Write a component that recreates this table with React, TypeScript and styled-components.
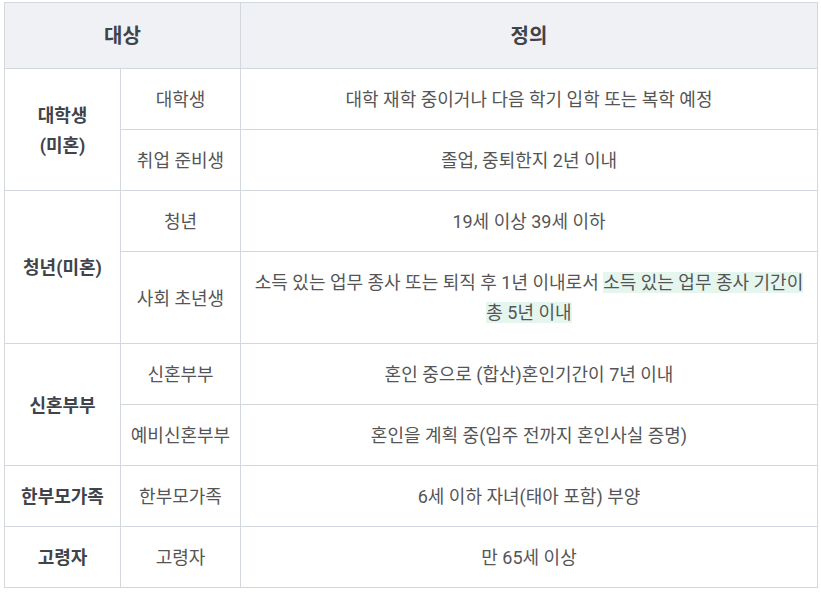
import styled, { createGlobalStyle } from "styled-components";

const GlobalStyle = createGlobalStyle`
  html, body {
    margin: 0;
    padding: 0;
    background: #ffffff;
  }
  body {
    font-family: Roboto, "Noto Sans CJK KR", sans-serif;
    color: #4a4a4a;
  }
`;

const Wrap = styled.div`
  padding: 2px 4px 0 4px;
`;

const Table = styled.table`
  width: 814px;
  border-collapse: collapse;
  table-layout: fixed;
  font-size: 18px;
  line-height: 30px;
`;

const Th = styled.th`
  background-color: #eff1f5;
  border: 1px solid #d3d8df;
  padding: 18px 10px 17px;
  font-size: 20px;
  font-weight: 700;
  color: #40434a;
  text-align: center;
`;

const Td = styled.td<{ $tall?: boolean }>`
  border: 1px solid #d3d8df;
  padding: 16px 5px ${({ $tall }) => ($tall ? "15px" : "14px")};
  text-align: center;
  vertical-align: middle;
  color: #555555;
`;

const GroupCell = styled(Td)`
  font-weight: 700;
  color: #40434a;
  padding-left: 2px;
  padding-right: 2px;
`;

const Mark = styled.span`
  background-color: #e5f6ef;
`;

type SubRow = { name: string; desc: React.ReactNode; tall?: boolean };
type Group = { title: React.ReactNode; rows: SubRow[] };

const groups: Group[] = [
  {
    title: (
      <>
        대학생
        <br />
        (미혼)
      </>
    ),
    rows: [
      { name: "대학생", desc: "대학 재학 중이거나 다음 학기 입학 또는 복학 예정" },
      { name: "취업 준비생", desc: "졸업, 중퇴한지 2년 이내" },
    ],
  },
  {
    title: "청년(미혼)",
    rows: [
      { name: "청년", desc: "19세 이상 39세 이하" },
      {
        name: "사회 초년생",
        tall: true,
        desc: (
          <>
            소득 있는 업무 종사 또는 퇴직 후 1년 이내로서{" "}
            <Mark>소득 있는 업무 종사 기간이 총 5년 이내</Mark>
          </>
        ),
      },
    ],
  },
  {
    title: "신혼부부",
    rows: [
      { name: "신혼부부", desc: "혼인 중으로 (합산)혼인기간이 7년 이내" },
      { name: "예비신혼부부", desc: "혼인을 계획 중(입주 전까지 혼인사실 증명)" },
    ],
  },
  {
    title: "한부모가족",
    rows: [{ name: "한부모가족", desc: "6세 이하 자녀(태아 포함) 부양" }],
  },
  {
    title: "고령자",
    rows: [{ name: "고령자", desc: "만 65세 이상" }],
  },
];

const App = () => {
  return (
    <>
      <GlobalStyle />
      <Wrap>
        <Table>
          <colgroup>
            <col style={{ width: 116 }} />
            <col style={{ width: 120 }} />
            <col />
          </colgroup>
          <thead>
            <tr>
              <Th colSpan={2}>대상</Th>
              <Th>정의</Th>
            </tr>
          </thead>
          <tbody>
            {groups.map((g, gi) =>
              g.rows.map((r, ri) => (
                <tr key={`${gi}-${ri}`}>
                  {ri === 0 && <GroupCell rowSpan={g.rows.length}>{g.title}</GroupCell>}
                  <Td>{r.name}</Td>
                  <Td $tall={r.tall}>{r.desc}</Td>
                </tr>
              ))
            )}
          </tbody>
        </Table>
      </Wrap>
    </>
  );
};

export default App;
